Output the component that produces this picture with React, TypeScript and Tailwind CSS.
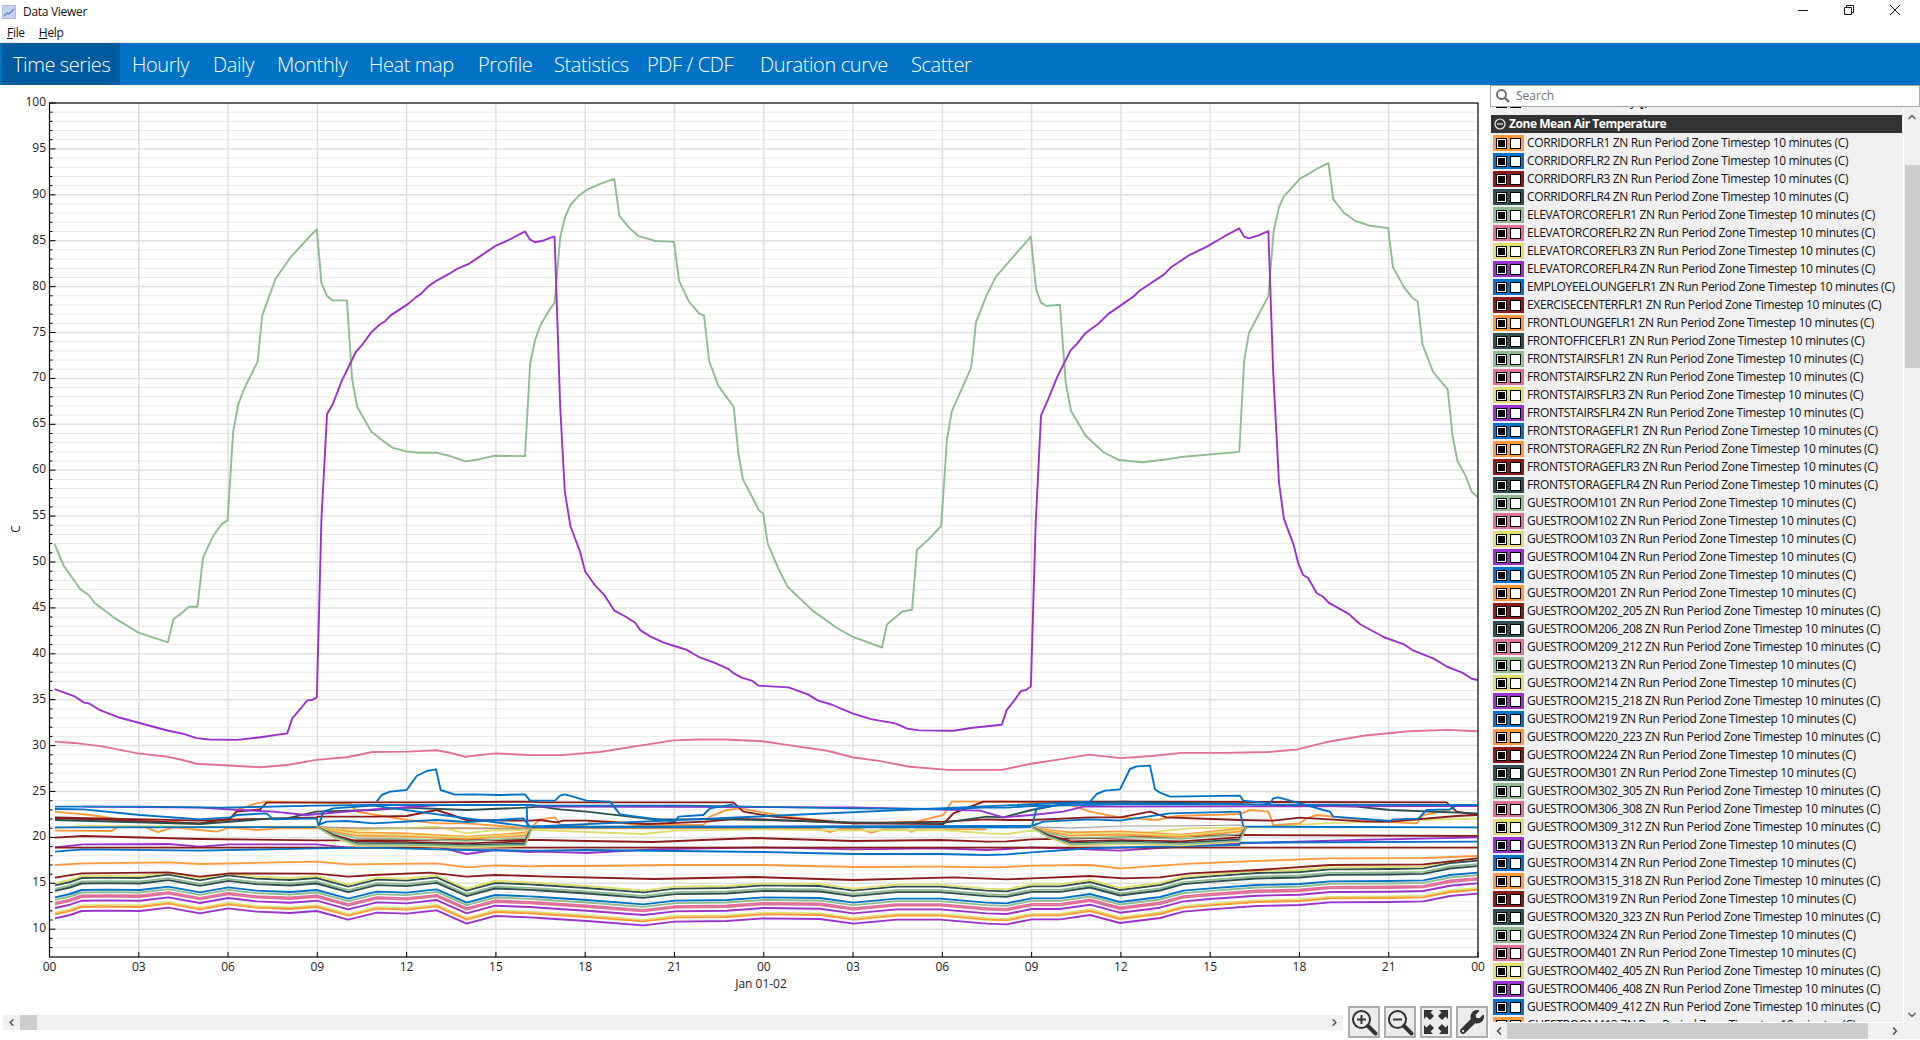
import { ChevronDown, ChevronLeft, ChevronRight, ChevronUp } from 'lucide-react';
import { FaWrench } from 'react-icons/fa';

const C = {
  o: '#ff9a3c',
  b: '#0072c6',
  r: '#8b1a1a',
  s: '#2f4f4f',
  g: '#8fbc8f',
  p: '#e0709a',
  y: '#dfdf6f',
  v: '#9932cc',
};
type Key = keyof typeof C;

const tabs = [
  { label: 'Time series', cls: 'w-[118px] pl-[11px] bg-[#005a9e]' },
  { label: 'Hourly', cls: 'w-[82px] pl-[12px]' },
  { label: 'Daily', cls: 'w-[64px] pl-[11px]' },
  { label: 'Monthly', cls: 'w-[92px] pl-[11px]' },
  { label: 'Heat map', cls: 'w-[109px] pl-[11px]' },
  { label: 'Profile', cls: 'w-[76px] pl-[11px]' },
  { label: 'Statistics', cls: 'w-[93px] pl-[11px]' },
  { label: 'PDF / CDF', cls: 'w-[113px] pl-[11px]' },
  { label: 'Duration curve', cls: 'w-[151px] pl-[11px]' },
  { label: 'Scatter', cls: 'w-[80px] pl-[11px]' },
];

const zones: [string, Key][] = [
  ['CORRIDORFLR1', 'o'], ['CORRIDORFLR2', 'b'], ['CORRIDORFLR3', 'r'], ['CORRIDORFLR4', 's'],
  ['ELEVATORCOREFLR1', 'g'], ['ELEVATORCOREFLR2', 'p'], ['ELEVATORCOREFLR3', 'y'], ['ELEVATORCOREFLR4', 'v'],
  ['EMPLOYEELOUNGEFLR1', 'b'], ['EXERCISECENTERFLR1', 'r'], ['FRONTLOUNGEFLR1', 'o'], ['FRONTOFFICEFLR1', 's'],
  ['FRONTSTAIRSFLR1', 'g'], ['FRONTSTAIRSFLR2', 'p'], ['FRONTSTAIRSFLR3', 'y'], ['FRONTSTAIRSFLR4', 'v'],
  ['FRONTSTORAGEFLR1', 'b'], ['FRONTSTORAGEFLR2', 'o'], ['FRONTSTORAGEFLR3', 'r'], ['FRONTSTORAGEFLR4', 's'],
  ['GUESTROOM101', 'g'], ['GUESTROOM102', 'p'], ['GUESTROOM103', 'y'], ['GUESTROOM104', 'v'], ['GUESTROOM105', 'b'],
  ['GUESTROOM201', 'o'], ['GUESTROOM202_205', 'r'], ['GUESTROOM206_208', 's'], ['GUESTROOM209_212', 'p'],
  ['GUESTROOM213', 'g'], ['GUESTROOM214', 'y'], ['GUESTROOM215_218', 'v'], ['GUESTROOM219', 'b'],
  ['GUESTROOM220_223', 'o'], ['GUESTROOM224', 'r'], ['GUESTROOM301', 's'], ['GUESTROOM302_305', 'g'],
  ['GUESTROOM306_308', 'p'], ['GUESTROOM309_312', 'y'], ['GUESTROOM313', 'v'], ['GUESTROOM314', 'b'],
  ['GUESTROOM315_318', 'o'], ['GUESTROOM319', 'r'], ['GUESTROOM320_323', 's'], ['GUESTROOM324', 'g'],
  ['GUESTROOM401', 'p'], ['GUESTROOM402_405', 'y'], ['GUESTROOM406_408', 'v'], ['GUESTROOM409_412', 'b'],
  ['GUESTROOM413', 'o'],
];

// chart geometry, in page pixels
const LEFT = 49.5;
const RIGHT = 1478;
const TOP = 103;
const BOTTOM = 957;
const yOf = (v: number) => 103 + (100 - v) * 9.18;
const xTicks = ['00', '03', '06', '09', '12', '15', '18', '21', '00', '03', '06', '09', '12', '15', '18', '21', '00'];
const xOf = (i: number) => LEFT + (i * (RIGHT - LEFT)) / 16;

type Pt = number[];
const z6 = (p: Pt[]) => p.map(([x, y]) => [x / 1.96, 90 + y / 2.305]);
const z7 = (p: Pt[]) => p.map(([x, y]) => [740 + x / 2.063, 90 + y / 2.305]);
const low = (a: Pt[], b: Pt[], c: Pt[]) => [
  ...a.filter(([x]) => x <= 1470).map(([x, y]) => [40 + x / 3, 760 + y / 3]),
  ...b.filter(([x]) => x >= 40 && x <= 1400).map(([x, y]) => [520 + x / 3, 760 + y / 3]),
  ...c.filter(([x]) => x >= 30).map(([x, y]) => [990 + x / 3, 760 + y / 3]),
];

const green = [
  ...z6([[107,1047],[125,1097],[145,1130],[157,1150],[175,1165],[185,1182],[222,1215],[270,1250],[329,1273],[340,1220],[360,1202],[370,1191],[387,1191],[398,1078],[418,1027],[435,1000],[446,992],[457,788],[467,725],[478,690],[505,626],[514,520],[540,435],[570,385],[605,340],[621,321],[630,445],[641,475],[652,485],[680,485],[690,665],[700,730],[728,788],[750,808],[770,825],[796,833],[820,836],[855,836],[880,843],[912,856],[940,851],[970,843],[1029,844],[1039,632],[1049,575],[1060,540],[1078,505],[1087,490],[1098,340],[1107,295],[1118,265],[1135,243],[1150,230],[1175,217],[1204,205],[1214,290],[1235,320],[1252,337],[1285,348],[1321,350],[1331,440],[1350,487],[1370,515],[1380,520],[1390,625],[1408,682],[1438,730],[1447,835],[1456,897],[1475,940],[1487,968],[1496,977],[1505,1047]]),
  ...z7([[78,1100],[98,1145],[150,1200],[200,1240],[232,1260],[293,1285],[303,1232],[335,1202],[355,1198],[365,1060],[388,1037],[415,1005],[427,805],[437,740],[477,640],[487,535],[508,475],[528,430],[575,370],[600,338],[611,460],[621,490],[632,498],[660,495],[672,675],[683,740],[713,797],[750,835],[782,853],[830,858],[870,853],[910,846],[1030,834],[1040,625],[1050,560],[1090,475],[1101,325],[1112,270],[1122,245],[1155,205],[1190,182],[1214,168],[1224,252],[1246,283],[1268,301],[1300,313],[1337,318],[1347,408],[1370,455],[1388,480],[1398,487],[1408,587],[1430,650],[1460,690],[1470,797],[1480,855],[1495,885],[1510,927],[1522,938]]),
];

const purple = [
  ...z6([[107,1381],[145,1397],[165,1412],[175,1414],[195,1429],[235,1447],[270,1458],[330,1477],[360,1484],[385,1494],[410,1497],[465,1498],[510,1492],[563,1483],[573,1448],[590,1425],[602,1407],[612,1406],[621,1400],[630,990],[641,747],[652,725],[670,670],[697,605],[708,590],[728,558],[745,540],[755,533],[765,520],[800,493],[815,478],[825,470],[840,452],[855,440],[880,424],[895,413],[920,400],[945,380],[970,360],[1000,344],[1029,326],[1039,345],[1049,351],[1065,347],[1078,341],[1087,338],[1098,730],[1107,925],[1118,1005],[1137,1065],[1147,1110],[1165,1140],[1185,1165],[1204,1200],[1225,1213],[1245,1228],[1255,1245],[1275,1260],[1300,1273],[1320,1281],[1345,1290],[1370,1307],[1400,1320],[1428,1335],[1440,1346],[1455,1355],[1475,1362],[1487,1373]]),
  ...z7([[100,1377],[140,1393],[160,1407],[190,1417],[232,1437],[270,1450],[320,1460],[345,1472],[370,1476],[440,1477],[480,1470],[540,1463],[550,1430],[565,1408],[580,1385],[590,1383],[600,1375],[610,1000],[621,750],[635,715],[655,660],[682,600],[695,585],[713,560],[740,538],[760,516],[790,493],[812,476],[825,462],[875,425],[890,408],[925,382],[965,360],[1000,337],[1030,319],[1040,338],[1050,342],[1070,335],[1090,325],[1100,650],[1112,905],[1122,988],[1142,1048],[1152,1092],[1162,1118],[1172,1125],[1190,1160],[1203,1168],[1215,1182],[1255,1207],[1280,1232],[1330,1262],[1370,1278],[1387,1291],[1430,1310],[1460,1330],[1490,1343],[1510,1357],[1522,1360]]),
];

const pink = [
  ...z6([[107,1502],[145,1505],[200,1513],[270,1529],[330,1537],[360,1545],[385,1553],[430,1556],[510,1561],[563,1556],[620,1544],[680,1538],[730,1526],[800,1525],[855,1522],[880,1527],[912,1537],[970,1529],[1040,1533],[1100,1533],[1175,1526],[1320,1499],[1370,1497],[1420,1497],[1495,1501]]),
  ...z7([[100,1510],[180,1523],[232,1538],[290,1547],[350,1560],[430,1567],[540,1567],[600,1553],[660,1543],[720,1532],[785,1540],[850,1535],[910,1528],[1000,1528],[1090,1526],[1150,1520],[1210,1503],[1290,1488],[1380,1478],[1460,1475],[1522,1478]]),
];

// the lowest purple line, the others in the lower bundle follow its shape
const lowest = low(
  [[45,475],[90,465],[125,453],[200,452],[300,453],[385,443],[480,460],[565,445],[650,455],[750,459],[830,453],[925,479],[1010,458],[1100,461],[1190,451],[1280,491],[1365,468],[1470,472]],
  [[60,474],[200,483],[370,496],[465,485],[620,483],[730,475],[900,477],[1000,491],[1130,479],[1260,479],[1400,491]],
  [[50,493],[125,478],[210,478],[300,465],[390,489],[510,474],[580,455],[660,448],[800,438],[930,435],[1020,427],[1200,426],[1300,424],[1380,408],[1462,401]],
);
const bundle: [Key, number][] = [
  ['s', 33], ['y', 35], ['g', 29.5], ['s', 27.5], ['g', 18.5], ['b', 21], ['p', 15.5], ['p', 14], ['v', 10.3], ['y', 5.5], ['o', 4], ['v', 0],
];

const mid: [Key, Pt[]][] = [
  ['o', low(
    [[45,315],[130,310],[385,307],[480,312],[830,305],[925,313],[1190,310],[1280,322],[1365,316],[1470,319]],
    [[60,318],[200,318],[465,315],[730,315],[1000,321],[1260,320],[1400,322]],
    [[50,321],[125,317],[300,315],[390,325],[600,311],[800,303],[1020,295],[1300,294],[1462,288]])],
  ['r', low(
    [[45,353],[125,340],[385,337],[480,350],[570,340],[830,341],[925,350],[1000,345],[1170,338],[1280,350],[1365,345],[1470,348]],
    [[60,349],[400,357],[700,351],[1000,360],[1300,352],[1400,356]],
    [[50,358],[125,355],[300,348],[400,355],[510,352],[600,340],[800,330],[1020,315],[1300,313],[1462,295]])],
  ['r', low(
    [[45,233],[130,228],[480,237],[830,241],[1460,240]],
    [[60,240],[200,243],[400,246],[700,234],[1000,243],[1260,240],[1400,245]],
    [[50,244],[125,238],[750,225],[1462,228]])],
  ['o', low(
    [[45,212],[215,213],[235,200],[310,200],[355,216],[400,202],[480,210],[530,215],[570,203],[650,210],[720,205],[830,205]],
    [[620,205],[900,207],[930,216],[960,207],[1020,207],[1055,218],[1090,208],[1160,208],[1175,216],[1190,208],[1400,208]],
    [[]])],
  ['v', low(
    [[45,262],[130,253],[385,252],[480,260],[570,253],[830,253],[925,263],[1190,260],[1280,282],[1365,270],[1470,276]],
    [[60,275],[200,279],[400,268],[730,262],[1000,268],[1260,265],[1400,270]],
    [[50,267],[125,262],[390,272],[600,258],[750,250],[1100,240],[1462,232]])],
  ['r', low([[45,263],[1470,263]], [[60,263],[1400,263]], [[50,263],[125,263],[300,263],[750,263],[1462,263]])],
  ['b', low(
    [[45,275],[130,268],[480,272],[830,265],[1000,263],[1190,268],[1280,270],[1470,272]],
    [[60,272],[200,270],[730,276],[1000,282],[1260,282],[1400,285]],
    [[50,283],[125,277],[300,265],[400,262],[748,255],[750,248],[1462,245]])],
  ['y', low(
    [[45,205],[130,197],[480,200],[830,200],[930,212],[1190,200],[1280,220],[1365,210],[1470,212]],
    [[60,210],[200,216],[370,222],[465,212],[730,208],[1000,212],[1260,210],[1400,220]],
    [[50,222],[125,212],[390,225],[600,205],[760,203],[1000,190],[1462,175]])],
  ['o', low(
    [[45,155],[150,165],[250,180],[480,190],[570,180],[590,150],[650,130],[680,125],[930,130],[950,155],[1010,165],[1100,180],[1190,190],[1280,190],[1470,205]],
    [[60,178],[105,172],[120,195],[200,195],[210,185],[270,185],[350,195],[550,195],[570,170],[620,150],[660,145],[800,170],[1000,190],[1190,185],[1270,165],[1295,125],[1380,125]],
    [[50,125],[230,130],[300,155],[390,172],[500,180],[560,168],[750,162],[780,150],[835,155],[850,195],[930,190],[950,175],[980,165],[1130,180],[1160,185],[1280,190],[1300,165],[1380,150]])],
  ['r', low(
    [[45,175],[170,178],[480,190],[570,175],[590,155],[660,148],[680,128],[1000,127],[1150,127],[1470,125]],
    [[60,127],[560,127],[640,127],[670,155],[760,170],[1000,190],[1270,192],[1300,160],[1390,125]],
    [[50,125],[400,125],[1370,127],[1400,155],[1462,165]])],
  ['r', low(
    [[45,172],[480,182],[830,172],[835,170],[1000,170],[1100,168],[1190,150],[1280,180],[1470,182]],
    [[60,180],[110,187],[130,182],[200,182],[380,192],[560,185],[640,177],[730,178],[1000,190],[1270,185],[1400,178]],
    [[50,180],[125,180],[300,172],[390,172],[480,155],[530,172],[750,180],[850,182],[930,173],[1130,185],[1200,185],[1400,168],[1462,165]])],
  ['s', low(
    [[45,180],[480,192],[700,175],[740,175],[830,155],[1000,150],[1100,143],[1280,150],[1460,143]],
    [[60,140],[120,148],[200,155],[400,178],[640,178],[1000,187],[1260,190],[1400,170]],
    [[40,172],[125,150],[230,130],[400,125],[1100,140],[1200,150],[1462,160]])],
  ['v', low(
    [[130,140],[480,143],[600,150],[700,155],[800,165],[1000,148],[1200,135],[1470,135]],
    [[60,140],[1000,142],[1380,152]],
    [[40,172],[125,165],[220,155],[280,140],[1462,138]])],
  ['b', low(
    [[45,147],[130,148],[300,165],[480,178],[570,172],[590,165],[680,160],[700,178],[830,175],[835,195],[860,185],[920,183],[1000,190],[1190,180],[1280,186],[1450,175],[1470,200]],
    [[]],
    [[125,198],[160,185],[300,178],[390,182],[540,160],[750,155],[760,200]])],
  ['b', low(
    [[1010,125],[1025,105],[1050,95],[1100,90],[1130,48],[1160,33],[1188,28],[1202,90],[1245,104],[1300,103],[1380,105],[1455,103],[1470,122]],
    [[40,122],[105,122],[120,107],[135,103],[200,122],[270,125],[300,163],[465,185],[475,170],[550,165],[570,145],[640,133]],
    [[]])],
  ['b', low(
    [[1460,135],[1462,200],[1470,200]],
    [[]],
    [[300,125],[320,102],[345,92],[390,88],[420,27],[440,19],[480,17],[495,88],[510,98],[540,110],[750,107],[760,122],[840,130],[850,115],[865,112],[930,130],[1000,150],[1020,155],[1030,170],[1200,183],[1210,178],[1285,176],[1310,150],[1380,148],[1400,135],[1462,135]])],
  ['b', low(
    [[45,140],[300,140],[550,143],[830,137],[1000,135],[1470,135]],
    [[60,137],[500,137],[1000,145],[1300,147],[1400,142]],
    [[50,143],[125,138],[400,133],[1462,135]])],
  ['b', low(
    [[45,202],[835,201],[850,155],[880,145],[1000,137]],
    [[40,202],[1400,202]],
    [[50,202],[125,201],[140,145],[240,130],[760,132]])],
  ['b', low([[]], [[]], [[760,200],[1462,202]])],
];

// the fan of guest room lines between 09 and 16, [y at 10h, 12h, 14h, 16h]
const fan: [Key, number, number, number, number][] = [
  ['o', 217, 220, 230, 218], ['y', 222, 225, 233, 222], ['o', 227, 230, 237, 227], ['g', 234, 237, 243, 234],
  ['r', 244, 246, 250, 244], ['b', 255, 257, 258, 254], ['p', 256, 258, 261, 257],
  ['y', 258, 258, 262, 258], ['s', 249, 250, 255, 250], ['g', 253, 254, 258, 255],
];
const fanLine = (day: number, f: [Key, number, number, number, number]) => {
  const lift = day ? -12 : 0;
  const px = (X: number, Y: number) => [40 + X / 3 + day * 714.4, 760 + Y / 3];
  return [
    px(830, 200),
    px(880, 200 + (f[1] - 200) * 0.55),
    px(950, f[1]),
    px(1100, f[2] + lift / 2),
    px(1280, f[3] + lift / 2),
    px(1455, f[4] + lift),
    px(1475, 203),
  ];
};

const toPath = (pts: Pt[]) => pts.map((p) => p.join(',')).join(' ');

function Chart() {
  const minors: number[] = [];
  for (let v = 8; v < 100; v++) if (v % 5 !== 0) minors.push(v);
  const majors = [10, 15, 20, 25, 30, 35, 40, 45, 50, 55, 60, 65, 70, 75, 80, 85, 90, 95];
  return (
    <svg width={1490} height={921} viewBox="0 85 1490 921" className="block" fontFamily="'Open Sans', sans-serif" fontSize={12}>
      {minors.map((v) => (
        <line key={v} x1={LEFT} x2={RIGHT} y1={yOf(v)} y2={yOf(v)} stroke="#d2d2d2" strokeDasharray="1 1" />
      ))}
      {majors.map((v) => (
        <line key={v} x1={LEFT} x2={RIGHT} y1={yOf(v)} y2={yOf(v)} stroke="#e0e0e0" strokeWidth={1.5} />
      ))}
      {xTicks.slice(1, 16).map((_, i) => (
        <line key={i} x1={xOf(i + 1)} x2={xOf(i + 1)} y1={TOP} y2={BOTTOM} stroke="#e0e0e0" strokeWidth={1.5} />
      ))}

      <g fill="none" strokeWidth={1.9} strokeLinejoin="round">
        {bundle.map(([c, off], i) => (
          <polyline key={i} points={toPath(lowest.map(([x, y]) => [x, y - off]))} stroke={C[c]} />
        ))}
        {mid.map(([c, pts], i) => (
          <polyline key={i} points={toPath(pts.filter((p) => p.length))} stroke={C[c]} />
        ))}
        {[0, 1].flatMap((day) => [
          <polyline key={`flat-${day}`} points={toPath(fanLine(day, ['o', 204, 204, 204, 207]))} stroke="#999" strokeWidth={1.2} />,
          ...fan.map((f, i) => <polyline key={`${day}-${i}`} points={toPath(fanLine(day, f))} stroke={C[f[0]]} strokeWidth={1.6} />),
        ])}
        <polyline points={toPath(pink)} stroke={C.p} />
        <polyline points={toPath(green)} stroke={C.g} />
        <polyline points={toPath(purple)} stroke={C.v} />
      </g>

      {minors.map((v) => (
        <line key={v} x1={LEFT} x2={LEFT + 3} y1={yOf(v)} y2={yOf(v)} stroke="#000" />
      ))}
      {[...majors, 100].map((v) => (
        <g key={v}>
          <line x1={LEFT} x2={LEFT + 6} y1={yOf(v)} y2={yOf(v)} stroke="#000" />
          <text x={46} y={yOf(v) - 1.5} textAnchor="end" dominantBaseline="central" fill="#222">
            {v}
          </text>
        </g>
      ))}
      {xTicks.map((t, i) => (
        <g key={i}>
          <line x1={xOf(i)} x2={xOf(i)} y1={BOTTOM - 5} y2={BOTTOM} stroke="#000" />
          <text x={xOf(i)} y={966} textAnchor="middle" dominantBaseline="central" fill="#222">
            {t}
          </text>
        </g>
      ))}
      <rect x={LEFT} y={TOP} width={RIGHT - LEFT} height={BOTTOM - TOP} fill="none" stroke="#000" strokeWidth={1.2} />
      <text x={761} y={983} textAnchor="middle" dominantBaseline="central" fill="#222">
        Jan 01-02
      </text>
      <text x={15} y={529} textAnchor="middle" dominantBaseline="central" fill="#222" transform="rotate(-90 15 529)">
        C
      </text>
    </svg>
  );
}

function Swatch({ color }: { color: string }) {
  return (
    <span className="ml-[3px] mr-[3px] flex h-[16px] w-[31px] shrink-0 items-center gap-[3px] pl-[3px]" style={{ backgroundColor: color }}>
      <span className="h-[11px] w-[11px] border border-black bg-white p-[1px]">
        <span className="block h-full w-full bg-black" />
      </span>
      <span className="h-[11px] w-[11px] border border-black bg-white" />
    </span>
  );
}

function ZoomIcon({ plus }: { plus?: boolean }) {
  return (
    <svg width={28} height={28} viewBox="0 0 28 28" fill="none" stroke="#333">
      <circle cx={11.5} cy={11.5} r={8.5} strokeWidth={2} />
      <path d="M7 11.5h9" strokeWidth={2} />
      {plus && <path d="M11.5 7v9" strokeWidth={2} />}
      <path d="M18 18l7.5 7.5" strokeWidth={4} strokeLinecap="round" />
    </svg>
  );
}

function FitIcon() {
  return (
    <svg width={26} height={26} viewBox="0 0 26 26" fill="#333">
      <path d="M1 1h9L7.500 3.500 11 7l-4 4-3.500-3.500L1 10z" />
      <path d="M25 1h-9l2.500 2.500L15 7l4 4 3.500-3.500L25 10z" />
      <path d="M1 25h9l-2.500-2.500L11 19l-4-4-3.500 3.500L1 16z" />
      <path d="M25 25h-9l2.500-2.500L15 19l4-4 3.500 3.500L25 16z" />
    </svg>
  );
}

function ToolButton({ children }: { children: React.ReactNode }) {
  return (
    <button className="flex h-[32px] w-[32px] items-center justify-center border-2 border-[#acacac] bg-[#ececec]">
      {children}
    </button>
  );
}

export default function App() {
  return (
    <div className="flex h-[1040px] w-[1920px] flex-col overflow-hidden bg-white font-['Open_Sans',sans-serif] text-[12px] text-[#111]">
      {/* title bar */}
      <div className="flex h-[24px] shrink-0 items-center">
        <svg width={14} height={14} viewBox="0 0 14 14" className="ml-[2px]">
          <rect width={14} height={14} fill="#a9bde6" />
          <rect x={1} y={1} width={12} height={12} fill="#c3d2f0" />
          <path d="M2 11l3-3 2 1 5-5" fill="none" stroke="#5b7fc7" strokeWidth={1.2} />
        </svg>
        <span className="ml-[7px] tracking-[-0.3px]">Data Viewer</span>
        <div className="ml-auto flex self-start pr-[2px]">
          <span className="flex h-[20px] w-[46px] items-center justify-center">
            <svg width={10} height={10} viewBox="0 0 10 10"><path d="M0 5.500h10" stroke="#111" /></svg>
          </span>
          <span className="flex h-[20px] w-[46px] items-center justify-center">
            <svg width={10} height={10} viewBox="0 0 10 10" fill="none" stroke="#111"><path d="M.5 2.500h7v7h-7zM2.500 2.500v-2h7v7h-2" /></svg>
          </span>
          <span className="flex h-[20px] w-[46px] items-center justify-center">
            <svg width={10} height={10} viewBox="0 0 10 10"><path d="M0 0l10 10M10 0L0 10" stroke="#111" /></svg>
          </span>
        </div>
      </div>
      {/* menu */}
      <div className="flex h-[18px] shrink-0 items-center gap-[14px] pl-[7px] tracking-[-0.3px]">
        <span><u>F</u>ile</span>
        <span><u>H</u>elp</span>
      </div>
      <div className="h-[1px] shrink-0 bg-[#f0f0f0]" />
      {/* tabs */}
      <div className="flex h-[42px] shrink-0 bg-[#0072c6] pl-[2px] text-[20px] font-light tracking-[-0.4px] text-white">
        {tabs.map((t) => (
          <div key={t.label} className={`flex items-center whitespace-nowrap pt-[2px] ${t.cls}`}>
            {t.label}
          </div>
        ))}
      </div>

      <div className="flex min-h-0 flex-1">
        {/* chart side */}
        <div className="flex w-[1490px] shrink-0 flex-col">
          <Chart />
          <div className="flex h-[32px] items-center gap-[4px] pr-[2px]">
            <div className="ml-[3px] mr-[1px] flex h-[15px] flex-1 items-center bg-[#f0f0f0] text-[#555]">
              <span className="flex w-[17px] justify-center"><ChevronLeft size={11} strokeWidth={3.5} /></span>
              <span className="h-full w-[17px] bg-[#cdcdcd]" />
              <span className="ml-auto flex w-[17px] justify-center"><ChevronRight size={11} strokeWidth={3.5} /></span>
            </div>
            <ToolButton><ZoomIcon plus /></ToolButton>
            <ToolButton><ZoomIcon /></ToolButton>
            <ToolButton><FitIcon /></ToolButton>
            <ToolButton><FaWrench size={24} color="#333" /></ToolButton>
          </div>
        </div>

        {/* series list */}
        <div className="flex w-[430px] flex-col">
          <div className="flex h-[22px] shrink-0 items-center border border-[#a8a8a8] bg-white pl-[5px]">
            <svg width={14} height={14} viewBox="0 0 14 14" fill="none" stroke="#666">
              <circle cx={5.5} cy={5.5} r={4.5} strokeWidth={1.8} />
              <path d="M9 9l4 4" strokeWidth={2.4} />
            </svg>
            <span className="ml-[6px] text-[#767676]">Search</span>
          </div>
          <div className="flex h-[916px] shrink-0">
            <div className="w-[414px] overflow-hidden border-b border-r border-white bg-[#f0f0f0] tracking-[-0.35px]">
              <div className="mt-[-14px] mb-[4px] flex h-[18px] items-center">
                <Swatch color="#f0f0f0" />
                <span className="whitespace-nowrap">Site Run Period Daily (J)</span>
              </div>
              <div className="mb-[1px] ml-[1px] flex h-[18px] w-[411px] items-center bg-[#333] font-bold tracking-[-0.45px] text-white">
                <svg width={12} height={12} viewBox="0 0 12 12" fill="none" stroke="#eee" className="ml-[3px] mr-[3px]">
                  <circle cx={6} cy={6} r={5} strokeWidth={1.2} />
                  <path d="M3 6h6" strokeWidth={1.2} />
                </svg>
                Zone Mean Air Temperature
              </div>
              {zones.map(([name, c]) => (
                <div key={name} className="flex h-[18px] items-center">
                  <Swatch color={C[c]} />
                  <span className="whitespace-nowrap">{name} ZN Run Period Zone Timestep 10 minutes (C)</span>
                </div>
              ))}
            </div>
            <div className="flex w-[16px] flex-col items-center bg-[#f0f0f0] text-[#666]">
              <span className="flex h-[20px] items-center"><ChevronUp size={12} strokeWidth={3.5} /></span>
              <span className="mt-[38px] h-[203px] w-[15px] bg-[#cdcdcd]" />
              <span className="mt-auto flex h-[16px] items-center"><ChevronDown size={12} strokeWidth={3.5} /></span>
            </div>
          </div>
          <div className="flex h-[16px] shrink-0 items-center bg-[#f0f0f0] text-[#555]">
            <span className="flex w-[17px] justify-center"><ChevronLeft size={12} strokeWidth={3.5} /></span>
            <span className="h-full w-[361px] bg-[#cdcdcd]" />
            <span className="ml-[18px] flex w-[17px] justify-center"><ChevronRight size={12} strokeWidth={3.5} /></span>
          </div>
        </div>
      </div>
    </div>
  );
}
